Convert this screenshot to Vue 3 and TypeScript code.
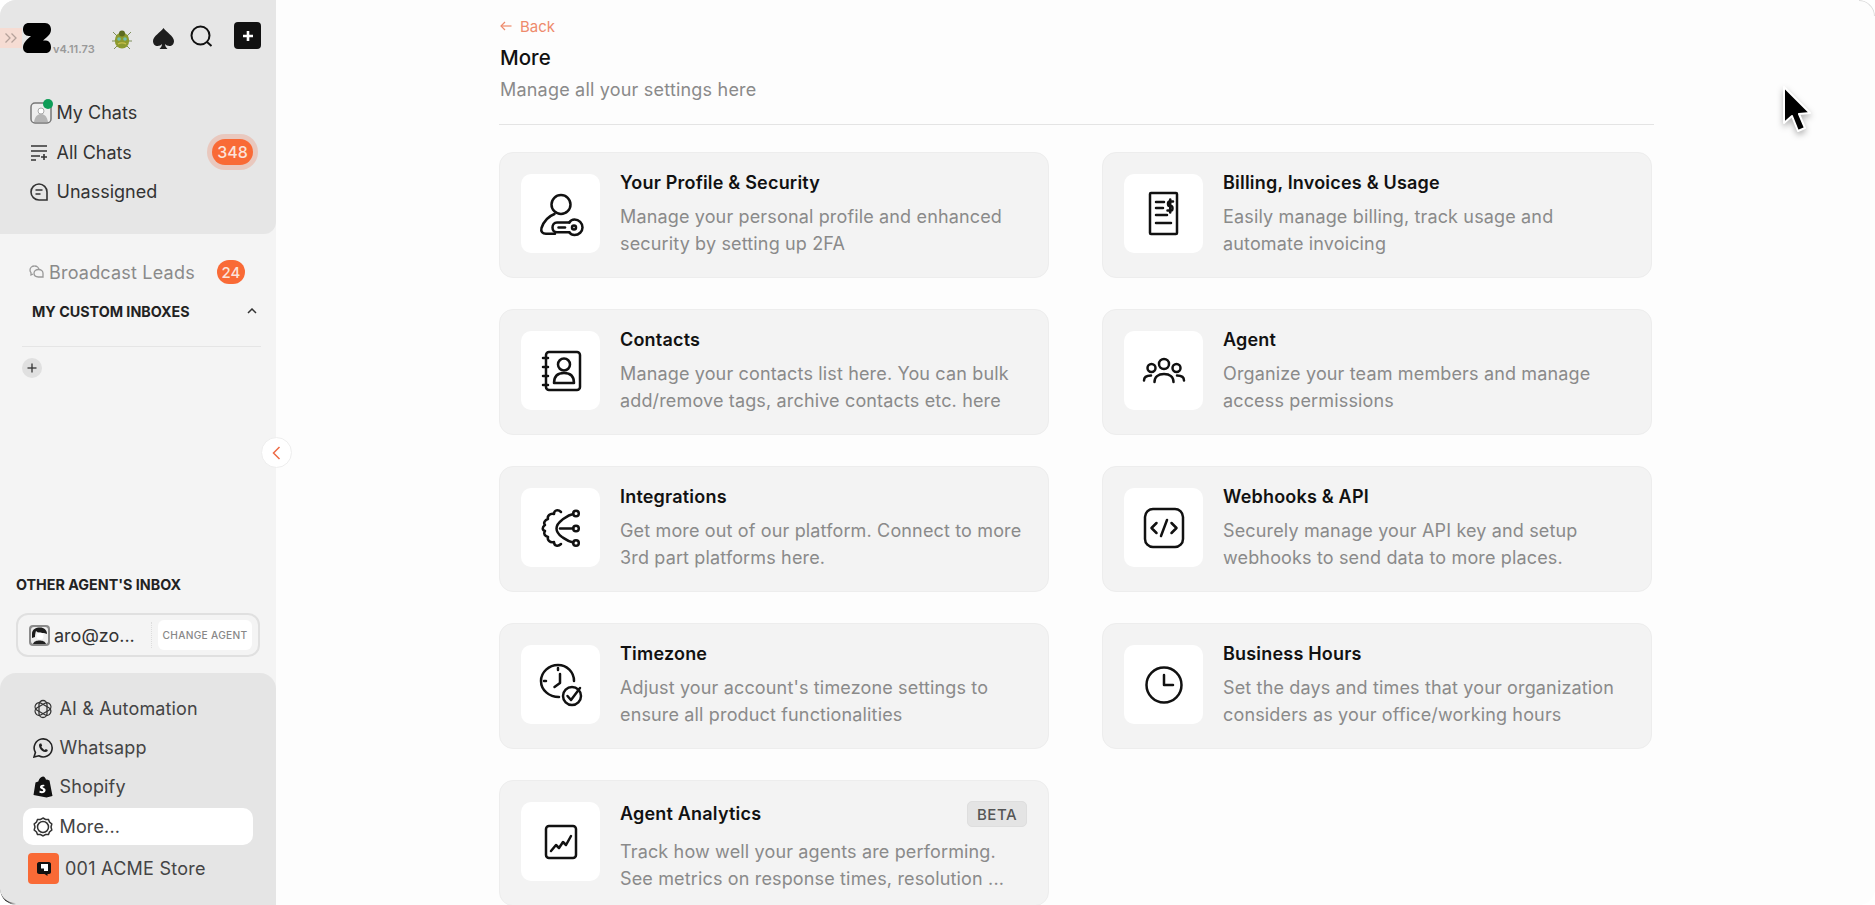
<script setup lang="ts">
interface Card {
  title: string
  lines: string[]
  paths: string[]
  beta?: boolean
}

const circle = (x: number, y: number, r: number): string =>
  `M${x - r} ${y}a${r} ${r} 0 1 0 ${2 * r} 0a${r} ${r} 0 1 0 ${-2 * r} 0`

const cards: Card[] = [
  {
    title: 'Your Profile & Security',
    lines: ['Manage your personal profile and enhanced', 'security by setting up 2FA'],
    paths: [
      circle(24, 14.5, 9.5),
      'M17.500 24C11 26.500 6.500 32 4.500 38C3.500 41.500 5.500 43.800 9 43.800H18',
      'M32.300 32.500H20C17 32.500 15.500 35 15.500 37.500C15.500 40 17 42.300 20 42.300H32.300',
      'M32.300 32.500C33.500 30.500 35.500 29.500 37.500 29.500C42 29.500 45.500 33 45.500 37.500C45.500 41.500 42 45 37.500 45C35.500 45 33.500 44 32.300 42.300',
      circle(37, 37.5, 2),
      'M21.500 37.500H28'
    ]
  },
  {
    title: 'Billing, Invoices & Usage',
    lines: ['Easily manage billing, track usage and', 'automate invoicing'],
    paths: [
      'M11 3H36a1 1 0 0 1 1 1V43a1 1 0 0 1-1 1H11a1 1 0 0 1-1-1V4a1 1 0 0 1 1-1Z',
      'M16 12H24', 'M16 18H23', 'M16 25H27', 'M16 33H31',
      'M33 11.500H29.500C27.500 11.500 27.500 16 29.500 16H31C33 16 33 20.500 31 20.500H27.500', 'M30.200 9.500V22.500'
    ]
  },
  {
    title: 'Contacts',
    lines: ['Manage your contacts list here. You can bulk', 'add/remove tags, archive contacts etc. here'],
    paths: [
      'M12 5H40a3 3 0 0 1 3 3V40a3 3 0 0 1-3 3H12a3 3 0 0 1-3-3V8a3 3 0 0 1 3-3Z',
      'M6 11H11', 'M6 20H11', 'M6 29H11', 'M6 38H11',
      circle(27, 17.5, 6),
      'M17 36C17 29 21 26 27 26C33 26 37 29 37 36Z'
    ]
  },
  {
    title: 'Agent',
    lines: ['Organize your team members and manage', 'access permissions'],
    paths: [
      circle(24, 17, 5), circle(11.5, 21, 4), circle(36.5, 21, 4),
      'M14.500 35C14.500 30 18 27 24 27C30 27 33.500 30 33.500 35',
      'M4 33.500C4 30 7 28.500 11 28.500', 'M44 33.500C44 30 41 28.500 37 28.500'
    ]
  },
  {
    title: 'Integrations',
    lines: ['Get more out of our platform. Connect to more', '3rd part platforms here.'],
    paths: [
      circle(39, 9.5, 2.8), circle(39, 24.5, 2.8), circle(39, 39, 2.8),
      'M36.200 10C31 11 28 14 25 16C21 19 19.500 21 19.500 24.500C19.500 28 21 30 25 33C28 35 31 37.500 36.200 38.500',
      'M36.200 24.500H23',
      'M24 8C21 5 17 6 17 10C13 9 10 12 11 15C8 16 6 19 8 21C5 23 5 26 8 27C6 30 8 32 11 33C10 36 13 39 17 38C17 42 21 43 24 40'
    ]
  },
  {
    title: 'Webhooks & API',
    lines: ['Securely manage your API key and setup', 'webhooks to send data to more places.'],
    paths: [
      'M13 5H35a8 8 0 0 1 8 8V35a8 8 0 0 1-8 8H13a8 8 0 0 1-8-8V13a8 8 0 0 1 8-8Z',
      'M16.500 19L11.500 24L16.500 29', 'M31.500 19L36.500 24L31.500 29', 'M27 16L21 32'
    ]
  },
  {
    title: 'Timezone',
    lines: ["Adjust your account's timezone settings to", 'ensure all product functionalities'],
    paths: [
      'M37 20C37 11 30 4 21 4C12 4 4 11 4 20C4 29 12 36 22 36',
      'M21 7V9', 'M7 20H9', 'M23 13V22L17.500 26',
      circle(35, 35, 9),
      'M30.500 35L34 39L43 27'
    ]
  },
  {
    title: 'Business Hours',
    lines: ['Set the days and times that your organization', 'considers as your office/working hours'],
    paths: [circle(24, 24, 17.5), 'M24 14V24H33']
  },
  {
    title: 'Agent Analytics',
    lines: ['Track how well your agents are performing.', 'See metrics on response times, resolution ...'],
    paths: [
      'M12 8H36a3 3 0 0 1 3 3V37a3 3 0 0 1-3 3H12a3 3 0 0 1-3-3V11a3 3 0 0 1 3-3Z',
      'M14 33L19 27L22 30L26 24L29 27L34 18'
    ],
    beta: true
  }
]

const topItems = ['My Chats', 'All Chats', 'Unassigned']
</script>

<template>
  <div class="window">
    <aside class="sidebar">
      <section class="top-panel">
        <div class="brand">
          <span class="expand-tab">
            <svg width="14" height="12" viewBox="0 0 14 12" fill="none" stroke="#b5a29b" stroke-width="1.3">
              <path d="M1.500 1.500L6 6L1.500 10.500" /><path d="M7.500 1.500L12 6L7.500 10.500" />
            </svg>
          </span>
          <svg class="logo" width="28" height="30" viewBox="0 0 28 30">
            <path d="M6 0H22C26 0 28 3 28 7C28 10 26 12 24 14L20 17.500H23C26 17.500 28 20.500 28 24C28 28 26 30 22 30H6C2 30 0 28 0 24C0 21 2 19 4 16.500L8 13H6C2 13 0 9.500 0 6.500C0 2.500 2 0 6 0Z" fill="#000" />
          </svg>
          <span class="version">v4.11.73</span>
          <svg class="bug" width="22" height="22" viewBox="0 0 22 22">
            <g stroke="#7f8f5a" stroke-width="1" fill="none">
              <path d="M6 8L2 4" /><path d="M16 8L20 4" /><path d="M4 13L1 13" /><path d="M18 13L21 13" /><path d="M6 18L3 21" /><path d="M16 18L19 21" />
            </g>
            <ellipse cx="11" cy="12.500" rx="7.200" ry="8" fill="#8c9a2e" />
            <circle cx="11" cy="5.500" r="3" fill="#5d6b20" />
            <circle cx="8" cy="11" r="1.800" fill="#6fc0b0" />
            <circle cx="14" cy="11" r="1.800" fill="#6fc0b0" />
            <path d="M7 16C9 14.500 13 14.500 15 16" stroke="#c9c04a" stroke-width="1.400" fill="none" />
          </svg>
          <svg class="spade" width="21" height="22" viewBox="0 0 21 22">
            <path d="M10.500 0C13 4 21 8 21 13C21 16 19 18 16.500 18C14.500 18 13 17 12 16C12.200 18 13 19.500 14.500 21H6.500C8 19.500 8.800 18 9 16C8 17 6.500 18 4.500 18C2 18 0 16 0 13C0 8 8 4 10.500 0Z" fill="#1e1e1e" />
          </svg>
          <svg class="search" width="23" height="23" viewBox="0 0 23 23" fill="none" stroke="#111" stroke-width="2">
            <circle cx="10.500" cy="10.500" r="9" /><path d="M17 17L21.500 21" />
          </svg>
          <span class="add-button">
            <svg width="12" height="12" viewBox="0 0 12 12" stroke="#fff" stroke-width="2.600"><path d="M6 1V11" /><path d="M1 6H11" /></svg>
          </span>
        </div>
        <nav class="top-nav">
          <div v-for="(item, i) in topItems" :key="item" class="nav-row">
            <span class="nav-icon">
              <template v-if="i === 0">
                <svg width="22" height="22" viewBox="0 0 22 22" fill="none">
                  <rect x="1" y="1" width="20" height="20" rx="4" stroke="#777" stroke-width="1.500" fill="#eee" />
                  <circle cx="11" cy="9" r="3" fill="#fff" stroke="#aaa" />
                  <path d="M4 20C5 14 8 12 11 12C14 12 17 14 18 20Z" fill="#b5b5b5" />
                </svg>
                <span class="online-dot"></span>
              </template>
              <svg v-else-if="i === 1" width="18" height="18" viewBox="0 0 18 18" fill="none" stroke="#333" stroke-width="1.600">
                <path d="M1 3H17" /><path d="M1 8H17" /><path d="M1 13H10" /><path d="M1 17H6" /><path d="M14 11V17" /><path d="M11 14H17" />
              </svg>
              <svg v-else width="18" height="18" viewBox="0 0 18 18" fill="none" stroke="#333" stroke-width="1.600">
                <path d="M17 17H9A8 8 0 1 1 17 9Z" /><path d="M5.500 7H12.500" /><path d="M5.500 11H10.500" />
              </svg>
            </span>
            <span class="nav-label">{{ item }}</span>
            <span v-if="i === 1" class="count count-glow">348</span>
          </div>
        </nav>
      </section>

      <section class="middle">
        <div class="broadcast">
          <svg width="15" height="14" viewBox="0 0 15 14" fill="none" stroke="#999" stroke-width="1.300">
            <path d="M5.500 1C3 1 1 2.800 1 5C1 6 1.400 7 2 7.700V10L4 9" /><path d="M5.500 1C8 1 10 2.800 10 5" />
            <path d="M9.500 4.500C7 4.500 5 6.200 5 8.300C5 10.500 7 12 9.500 12H14V8.300C14 6.200 12 4.500 9.500 4.500Z" />
          </svg>
          <span class="broadcast-label">Broadcast Leads</span>
          <span class="count count-small">24</span>
        </div>
        <div class="custom-head">
          <span>MY CUSTOM INBOXES</span>
          <svg width="10" height="6" viewBox="0 0 10 6" fill="none" stroke="#333" stroke-width="1.500"><path d="M1 5L5 1L9 5" /></svg>
        </div>
        <div class="custom-rule"></div>
        <span class="add-inbox">
          <svg width="10" height="10" viewBox="0 0 10 10" stroke="#333" stroke-width="1.300"><path d="M5 0.500V9.500" /><path d="M0.500 5H9.500" /></svg>
        </span>
        <div class="spacer"></div>
        <div class="other-head">OTHER AGENT'S INBOX</div>
        <div class="agent-box">
          <svg class="avatar" width="21" height="21" viewBox="0 0 21 21">
            <rect width="21" height="21" rx="4" fill="#8b8b8b" />
            <rect x="2" y="2" width="17" height="17" rx="3" fill="#eee" />
            <path d="M3 9C3 4 7 2.500 11 2.500C15 2.500 18 5 18 9L15 8C12 8 9 8 7 6C6.500 8 6 9 6 12L3 13Z" fill="#1b1b1b" />
            <circle cx="11" cy="11" r="3.500" fill="#fff" />
            <path d="M4 19C5 16 8 15.500 10.500 15.500C13 15.500 16 16 17 19Z" fill="#222" />
          </svg>
          <span class="agent-name">aro@zo...</span>
          <span class="agent-sep"></span>
          <span class="change-btn">CHANGE AGENT</span>
        </div>
      </section>

      <section class="bottom-panel">
        <div class="bottom-row">
          <svg width="20" height="20" viewBox="0 0 20 20" fill="none" stroke="#333" stroke-width="1.300">
            <rect x="6" y="1.500" width="8" height="17" rx="4" />
            <rect x="6" y="1.500" width="8" height="17" rx="4" transform="rotate(60 10 10)" />
            <rect x="6" y="1.500" width="8" height="17" rx="4" transform="rotate(120 10 10)" />
          </svg>
          <span>AI &amp; Automation</span>
        </div>
        <div class="bottom-row">
          <svg width="20" height="20" viewBox="0 0 20 20" fill="none" stroke="#222" stroke-width="1.600">
            <path d="M1 19L2.400 14.500A9 9 0 1 1 5.800 17.800Z" />
            <path d="M7 5.500C6 6 5.700 7.500 6.500 9.500C7.500 12 10 14 12.500 14C14 14 14.800 13 14.800 12L12.800 11L11.800 12C10.500 11.500 9 10 8.300 8.800L9.200 7.800L8.300 5.500Z" fill="#222" stroke="none" />
          </svg>
          <span>Whatsapp</span>
        </div>
        <div class="bottom-row">
          <svg width="20" height="22" viewBox="0 0 20 22">
            <path d="M14 3.500L13 3.800C12.500 2 11.500 0.500 10 0.500C8 0.500 6 2.800 5.300 5.500L2.500 6.400L0.500 19L13.500 21.500L19.500 20L16.500 4.500Z" fill="#111" />
            <path d="M11.500 9C9.500 8.300 7.200 9 7 11C6.900 13 10.300 13 10.200 14.500C10 15.700 8 15.300 6.800 14.600L6.300 16.600C8.500 17.800 12.400 17.300 12.600 14.300C12.700 12 9.400 11.800 9.500 10.800C9.600 10.200 10.500 10 11 10.700Z" fill="#fff" />
          </svg>
          <span>Shopify</span>
        </div>
        <div class="bottom-row active">
          <svg width="20" height="20" viewBox="0 0 20 20" fill="none" stroke="#333" stroke-width="1.500">
            <path d="M10 1L12.500 2.500L15.500 2.500L16.500 5L18.800 7L18 10L18.800 13L16.500 15L15.500 17.500L12.500 17.500L10 19L7.500 17.500L4.500 17.500L3.500 15L1.200 13L2 10L1.200 7L3.500 5L4.500 2.500L7.500 2.500Z" />
            <circle cx="10" cy="10" r="5.500" />
          </svg>
          <span>More...</span>
        </div>
        <div class="store-row">
          <span class="store-logo">
            <svg width="16" height="16" viewBox="0 0 16 16">
              <path d="M3 1H13C14 1 15 2 15 3V11C15 12 14 13 13 13H11.500V15L8.500 13H3C2 13 1 12 1 11V3C1 2 2 1 3 1Z" fill="#111" />
              <path d="M5 3H12V10H8V7.500H5Z" fill="#fff" />
            </svg>
          </span>
          <span>001 ACME Store</span>
        </div>
      </section>
    </aside>

    <button class="collapse" type="button">
      <svg width="9" height="14" viewBox="0 0 9 14" fill="none" stroke="#ee6a45" stroke-width="1.500"><path d="M7.500 1L1.500 7L7.500 13" /></svg>
    </button>

    <main class="main">
      <header class="page-head">
        <div class="back">
          <svg width="12" height="10" viewBox="0 0 12 10" fill="none" stroke="#ee8a6c" stroke-width="1.200"><path d="M5 1L1 5L5 9" /><path d="M1 5H11.500" /></svg>
          <span>Back</span>
        </div>
        <h1 class="page-title">More</h1>
        <p class="page-sub">Manage all your settings here</p>
      </header>
      <div class="rule"></div>
      <div class="grid">
        <article v-for="card in cards" :key="card.title" class="card">
          <div class="icon-box">
            <svg width="48" height="48" viewBox="0 0 48 48" fill="none" stroke="#111" stroke-width="2.500" stroke-linecap="round" stroke-linejoin="round">
              <path v-for="d in card.paths" :key="d" :d="d" />
            </svg>
          </div>
          <div class="card-text">
            <div class="card-head" :class="{ 'with-badge': card.beta }">
              <h2>{{ card.title }}</h2>
              <span v-if="card.beta" class="beta">BETA</span>
            </div>
            <p v-for="line in card.lines" :key="line">{{ line }}</p>
          </div>
        </article>
      </div>
    </main>

    <svg class="cursor" width="32" height="52" viewBox="0 0 32 52">
      <path d="M3 2L3 38L11 31L17 46L24 43L18 29L29 28Z" fill="#000" stroke="#fff" stroke-width="2" stroke-linejoin="round" />
    </svg>
    <span class="corner-top"></span>
    <span class="corner-arc"></span>
  </div>
</template>

<style>
html, body {
  margin: 0;
  background: #fff;
}
</style>

<style scoped>
.window {
  position: relative;
  display: flex;
  width: 1875px;
  height: 905px;
  overflow: hidden;
  box-sizing: border-box;
  border-radius: 16px;
  background: #fdfdfd;
  font-family: Inter, "Liberation Sans", sans-serif;
  color: #333;
}
.corner-top {
  position: absolute;
  right: 0;
  top: 0;
  width: 16px;
  height: 16px;
  box-sizing: border-box;
  border-top: 1px solid #dcdcdc;
  border-right: 1px solid #dcdcdc;
  border-top-right-radius: 16px;
  pointer-events: none;
}
.corner-arc {
  position: absolute;
  left: 0;
  bottom: 0;
  width: 16px;
  height: 16px;
  box-sizing: border-box;
  border-bottom: 2px solid #222;
  border-bottom-left-radius: 16px;
  mask-image: linear-gradient(to right, #000 40%, transparent);
  pointer-events: none;
}
.sidebar {
  display: flex;
  flex-direction: column;
  flex: 0 0 276px;
  height: 905px;
  background: #f4f4f4;
}
.top-panel {
  height: 234px;
  box-sizing: border-box;
  background: #e6e6e6;
  border-bottom-right-radius: 12px;
  padding-top: 23px;
}
.brand {
  display: flex;
  align-items: flex-start;
  height: 30px;
}
.expand-tab {
  display: flex;
  align-items: center;
  justify-content: center;
  width: 22px;
  height: 20px;
  margin-top: 5px;
  margin-right: 1px;
  background: #f6dcd3;
}
.version {
  margin: 19px 0 0 2px;
  width: 40px;
  font-size: 11px;
  line-height: 14px;
  font-weight: 600;
  color: #999;
}
.bug { margin: 5px 0 0 18px; }
.spade { margin: 5px 0 0 20px; }
.search { margin: 2px 0 0 16px; }
.add-button {
  display: flex;
  align-items: center;
  justify-content: center;
  width: 27px;
  height: 27px;
  margin-top: -1px;
  margin-left: 21px;
  background: #111;
  border-radius: 4px;
}
.top-nav {
  display: flex;
  flex-direction: column;
  margin-top: 40px;
  padding: 0 23px 0 30px;
}
.nav-row {
  display: flex;
  align-items: center;
  height: 39.5px;
}
.nav-icon {
  position: relative;
  display: flex;
  align-items: center;
  width: 26.5px;
}
.online-dot {
  position: absolute;
  left: 13px;
  top: -3px;
  width: 10px;
  height: 10px;
  border-radius: 50%;
  background: #0f9d58;
}
.nav-label {
  font-size: 18px;
  color: #333;
}
.count {
  display: flex;
  align-items: center;
  justify-content: center;
  background: #f96a36;
  color: #fbe3da;
  font-weight: 500;
  border-radius: 14px;
}
.count-glow {
  margin-left: auto;
  width: 41px;
  height: 26px;
  font-size: 16px;
  box-shadow: 0 0 0 5px rgba(245, 110, 70, 0.25);
}
.count-small {
  width: 28px;
  height: 24px;
  margin-left: 22px;
  font-size: 15px;
}
.middle {
  display: flex;
  flex-direction: column;
  flex: 1;
  padding: 26px 15px 16px 16px;
}
.broadcast {
  display: flex;
  align-items: center;
  padding-left: 13px;
  height: 24px;
}
.broadcast-label {
  margin-left: 5px;
  font-size: 18px;
  letter-spacing: 0.2px;
  color: #8a8a8a;
}
.custom-head {
  display: flex;
  align-items: center;
  justify-content: space-between;
  margin-top: 17px;
  padding: 0 4px 0 16px;
  height: 20px;
  font-size: 14.3px;
  font-weight: 700;
  color: #222;
}
.custom-rule {
  height: 1px;
  margin: 25px 0 0 6px;
  background: #e5e5e5;
}
.add-inbox {
  display: flex;
  align-items: center;
  justify-content: center;
  width: 20px;
  height: 20px;
  margin: 11px 0 0 6px;
  border-radius: 50%;
  background: #e0e0e0;
}
.spacer { flex: 1; }
.other-head {
  font-size: 14.3px;
  font-weight: 700;
  color: #222;
  line-height: 18px;
}
.agent-box {
  display: flex;
  align-items: center;
  box-sizing: border-box;
  width: 244px;
  height: 44px;
  margin-top: 19px;
  padding: 0 6px 0 11px;
  border: 2px solid #e0e0e0;
  border-radius: 12px;
}
.agent-name {
  margin-left: 4px;
  font-size: 18px;
  color: #333;
  white-space: nowrap;
}
.agent-sep {
  height: 26px;
  margin-left: auto;
  border-left: 1px dotted #ddd;
}
.change-btn {
  display: flex;
  align-items: center;
  justify-content: center;
  width: 94px;
  height: 30px;
  margin-left: 6px;
  border-radius: 6px;
  background: #fff;
  font-size: 10.2px;
  font-weight: 500;
  letter-spacing: 0.3px;
  color: #888;
  white-space: nowrap;
}
.bottom-panel {
  display: flex;
  flex-direction: column;
  box-sizing: border-box;
  height: 232px;
  padding: 16px 23px 0;
  background: #e5e5e5;
  border-radius: 16px 16px 0 0;
}
.bottom-row {
  display: flex;
  align-items: center;
  gap: 6.5px;
  height: 39px;
  padding-left: 10px;
  font-size: 18px;
  letter-spacing: 0.15px;
  color: #444;
}
.bottom-row.active {
  height: 37px;
  margin-top: 2px;
  margin-bottom: 8px;
  background: #fff;
  border-radius: 10px;
}
.store-row {
  display: flex;
  align-items: center;
  gap: 6px;
  padding-left: 5px;
  font-size: 18px;
  letter-spacing: 0.25px;
  color: #444;
}
.store-logo {
  display: flex;
  align-items: center;
  justify-content: center;
  width: 31px;
  height: 31px;
  background: #f96a36;
  border-radius: 4px;
}
.collapse {
  position: absolute;
  left: 261px;
  top: 437px;
  display: flex;
  align-items: center;
  justify-content: center;
  width: 31px;
  height: 31px;
  padding: 0;
  border: 1px solid #eee;
  border-radius: 50%;
  background: #fff;
}
.main {
  flex: 1;
  padding: 17px 0 0 223px;
}
.page-head {
  padding-left: 1px;
}
.back {
  display: flex;
  align-items: center;
  gap: 8px;
  height: 18px;
  font-size: 15px;
  color: #ee8a6c;
}
.page-title {
  margin: 9px 0 0;
  font-size: 20.5px;
  line-height: 28px;
  font-weight: 500;
  color: #111;
}
.page-sub {
  margin: 7px 0 0;
  font-size: 18px;
  letter-spacing: 0.2px;
  line-height: 22px;
  color: #8a8a8a;
}
.rule {
  width: 1155px;
  height: 1px;
  margin-top: 23px;
  background: #e4e4e4;
}
.grid {
  display: grid;
  grid-template-columns: 550px 550px;
  column-gap: 53px;
  row-gap: 31px;
  margin-top: 27px;
}
.card {
  display: flex;
  gap: 20px;
  box-sizing: border-box;
  height: 126px;
  padding: 21px 21px 0;
  background: #f3f3f3;
  border: 1px solid #ededed;
  border-radius: 14px;
}
.icon-box {
  display: flex;
  align-items: center;
  justify-content: center;
  flex: 0 0 79px;
  height: 79px;
  background: #fff;
  border-radius: 10px;
}
.card-text {
  flex: 1;
  min-width: 0;
  margin-top: -2px;
}
.card-head {
  display: flex;
  align-items: center;
  justify-content: space-between;
  height: 22px;
  margin-bottom: 10px;
}
.card-head.with-badge {
  height: 26px;
  margin-top: 1px;
  margin-bottom: 12px;
}
.card-head h2 {
  margin: 0;
  font-size: 18px;
  letter-spacing: 0.2px;
  line-height: 22px;
  font-weight: 600;
  color: #111;
}
.card-text p {
  margin: 0;
  font-size: 18px;
  letter-spacing: 0.15px;
  line-height: 26.5px;
  color: #8a8a8a;
  white-space: nowrap;
}
.beta {
  display: flex;
  align-items: center;
  justify-content: center;
  width: 60px;
  height: 26px;
  box-sizing: border-box;
  border: 1px solid #dedede;
  border-radius: 5px;
  background: #e4e4e4;
  font-size: 15px;
  font-weight: 500;
  letter-spacing: 0.5px;
  color: #555;
}
.cursor {
  position: absolute;
  left: 1781px;
  top: 85px;
  filter: drop-shadow(0 3px 3px rgba(0, 0, 0, 0.3));
}
</style>
